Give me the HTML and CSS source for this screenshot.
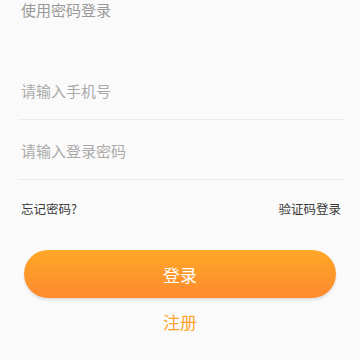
FILE: index.html
```html
<!DOCTYPE html>
<html lang="zh">
<head>
    <meta charset="UTF-8">
    <meta name="viewport" content="width=device-width, initial-scale=1.0">
    <title>使用密码登录</title>
    <link rel="stylesheet" href="styles.css">
</head>
<body>
    <div class="login-page">
        <h1 class="login-title">使用密码登录</h1>

        <div class="form-fields">
            <div class="field-row">
                <input type="text" class="field-input" placeholder="请输入手机号">
            </div>
            <div class="field-row">
                <input type="password" class="field-input" placeholder="请输入登录密码">
            </div>
        </div>

        <div class="link-row">
            <a href="#" class="small-link">忘记密码?</a>
            <a href="#" class="small-link">验证码登录</a>
        </div>

        <button class="login-button">登录</button>
        <a href="#" class="register-link">注册</a>
    </div>
</body>
</html>
```

FILE: styles.css
```css
* {
    box-sizing: border-box;
    margin: 0;
    padding: 0;
}

body {
    font-family: "Noto Sans CJK SC", "Noto Sans", sans-serif;
    background: #fafafa;
    color: #333;
}

.login-page {
    padding: 0 16px 0 18px;
}

.login-title {
    font-size: 15px;
    font-weight: normal;
    color: #999;
    line-height: 20px;
    padding-left: 3px;
    height: 60px;
}

.field-row {
    height: 60px;
    border-bottom: 1px solid #ececec;
    display: flex;
    align-items: center;
    padding-top: 1px;
}

.field-input {
    width: 100%;
    border: none;
    outline: none;
    background: transparent;
    font-family: inherit;
    font-size: 15px;
    color: #333;
    padding-left: 3px;
}

.field-input::placeholder {
    color: #aaa;
}

.link-row {
    display: flex;
    justify-content: space-between;
    padding: 19px 3px 0 3px;
    height: 70px;
}

.small-link {
    font-size: 12.5px;
    color: #3a3a3a;
    text-decoration: none;
    line-height: 20px;
}

.login-button {
    display: block;
    width: 312px;
    height: 48px;
    margin: 0 0 0 6px;
    border: none;
    border-radius: 24px;
    background: linear-gradient(to bottom, #ffa727, #ff8a2e);
    box-shadow: 0 2px 3px rgba(0,0,0,0.12);
    color: white;
    font-family: inherit;
    font-size: 17px;
    cursor: pointer;
}

.register-link {
    display: block;
    text-align: center;
    margin: 12px 0 0 -2px;
    font-size: 17px;
    color: #ffa52c;
    text-decoration: none;
    line-height: 24px;
}
```
